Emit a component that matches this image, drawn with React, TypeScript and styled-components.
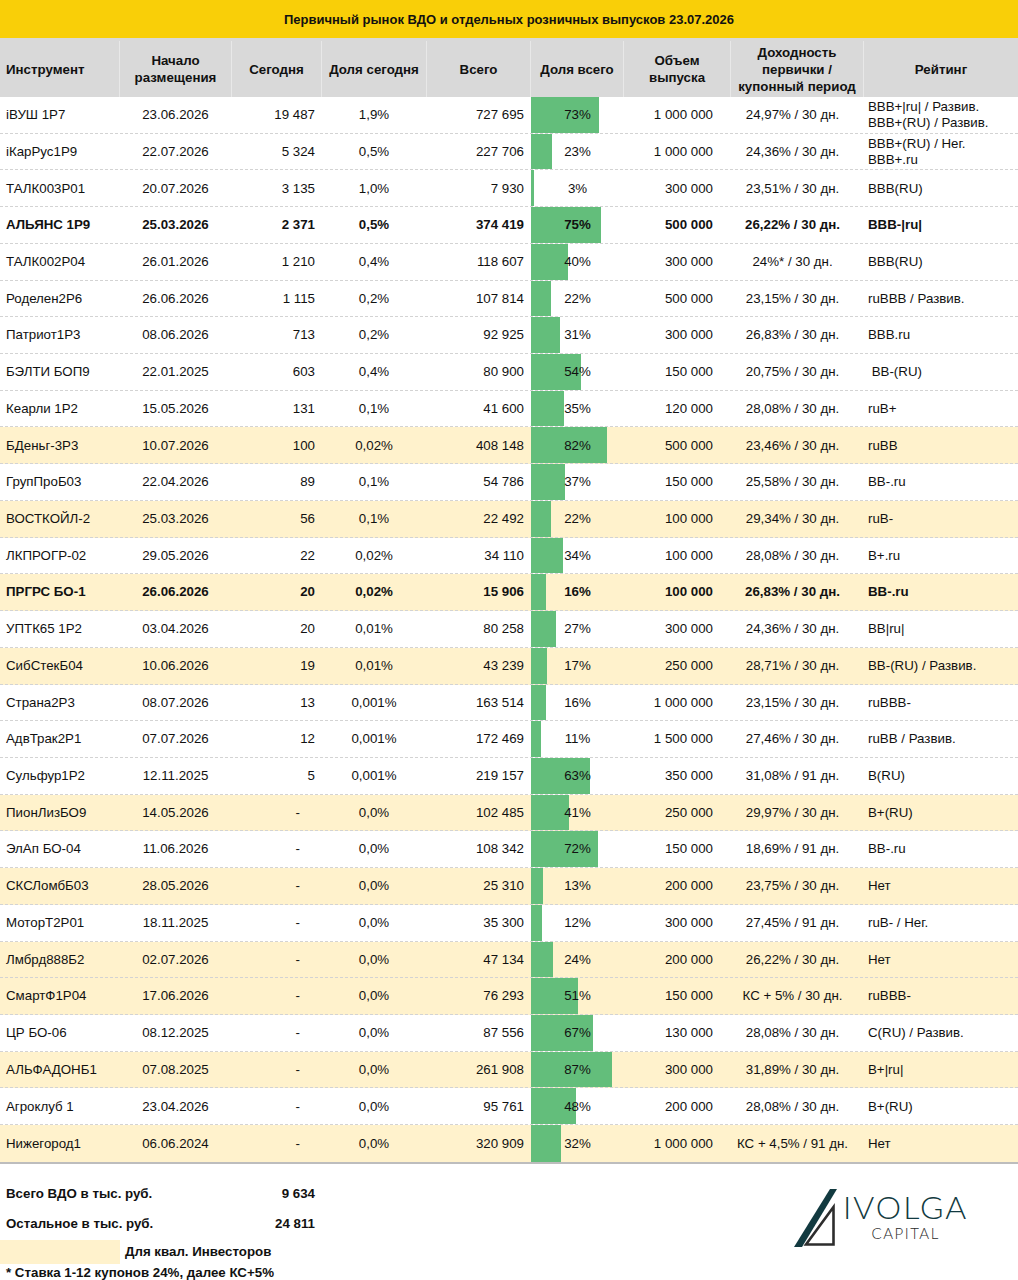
import React from "react";
import styled, { createGlobalStyle, css } from "styled-components";

const GlobalStyle = createGlobalStyle`
  * {
    box-sizing: border-box;
  }
  body {
    margin: 0;
    background: #fff;
    font-family: "Liberation Sans", Arial, sans-serif;
    color: #111;
  }
`;

const COLS = "120px 112px 90px 105px 104px 93px 107px 133px 1fr";

const Page = styled.div`
  width: 1018px;
  font-size: 13.3px;
`;

const TitleBar = styled.div`
  height: 38px;
  display: flex;
  align-items: center;
  justify-content: center;
  background: #f9cf08;
  font-weight: 700;
  font-size: 13px;
`;

const HeaderRow = styled.div`
  display: grid;
  grid-template-columns: ${COLS};
  height: 59px;
  padding-top: 3px;
  background: #d9d9d9;
`;

const HeaderCell = styled.div<{ $left?: boolean }>`
  display: flex;
  align-items: center;
  justify-content: ${(p) => (p.$left ? "flex-start" : "center")};
  padding: 0 6px;
  text-align: ${(p) => (p.$left ? "left" : "center")};
  font-weight: 700;
  line-height: 17px;
  white-space: pre-line;
  border-right: 1px solid #e8e8e8;

  &:last-child {
    border-right: none;
  }
`;

const Body = styled.div`
  border-bottom: 2px solid #bdbdbd;
`;

const Row = styled.div<{ $yellow?: boolean; $bold?: boolean }>`
  display: grid;
  grid-template-columns: ${COLS};
  height: 36.72px;
  padding-top: 1px;
  background: ${(p) => (p.$yellow ? "#fff2cc" : "#fff")};
  border-bottom: 1px dashed #d3d3d3;
  font-weight: ${(p) => (p.$bold ? 700 : 400)};
  line-height: 16.5px;

  &:last-child {
    border-bottom: none;
  }
`;

type Align = "left" | "center" | "right";

const Cell = styled.div<{ $align?: Align; $pl?: number; $pr?: number }>`
  display: flex;
  align-items: center;
  white-space: pre;
  padding: 0 ${(p) => p.$pr ?? 7}px 0 ${(p) => p.$pl ?? 6}px;
  ${(p) =>
    p.$align === "right"
      ? css`
          justify-content: flex-end;
        `
      : p.$align === "center"
      ? css`
          justify-content: center;
          text-align: center;
        `
      : css`
          justify-content: flex-start;
        `}
`;

const Dash = styled.span`
  margin-right: 15px;
`;

const BarCell = styled.div`
  position: relative;
  display: flex;
  align-items: center;
  justify-content: center;
`;

const Bar = styled.div`
  position: absolute;
  left: 0;
  top: -1px;
  bottom: 0;
  background: #63be7b;
`;

const BarText = styled.span`
  position: relative;
`;

const Footer = styled.div`
  display: flex;
  padding-top: 15px;
  font-weight: 700;
`;

const FooterLeft = styled.div`
  width: 322px;
  display: flex;
  flex-direction: column;
`;

const SumRow = styled.div`
  display: grid;
  grid-template-columns: 226px 83px;
  height: 30px;
  align-items: center;
  padding-left: 6px;
`;

const SumValue = styled.span`
  text-align: right;
`;

const QualRow = styled.div`
  display: flex;
  align-items: center;
  height: 24px;
  margin-top: 1px;
`;

const Swatch = styled.div`
  width: 120px;
  height: 24px;
  background: #fff2cc;
  margin-right: 5px;
`;

const Note = styled.div`
  height: 18px;
  display: flex;
  align-items: center;
  padding-left: 6px;
`;

const Logo = styled.div`
  display: flex;
  align-items: flex-start;
  margin-left: 471px;
  margin-top: 8px;
`;

const LogoText = styled.div`
  display: flex;
  flex-direction: column;
  align-items: center;
  margin-left: 4px;
  font-family: Lato, "Open Sans", sans-serif;
  font-weight: 300;
`;

const LogoTitle = styled.span`
  font-size: 32px;
  line-height: 34px;
  letter-spacing: 2px;
  color: #123a40;
  margin-top: 3px;
`;

const LogoSub = styled.span`
  font-size: 15px;
  line-height: 16px;
  letter-spacing: 1.5px;
  color: #2b2b2b;
  margin-top: 1px;
`;

type Bond = {
  name: string;
  start: string;
  today: string;
  todayShare: string;
  total: string;
  share: number;
  volume: string;
  yieldText: string;
  rating: string;
  yellow?: boolean;
  bold?: boolean;
};

const bonds: Bond[] = [
  { name: "iВУШ 1P7", start: "23.06.2026", today: "19 487", todayShare: "1,9%", total: "727 695", share: 73, volume: "1 000 000", yieldText: "24,97% / 30 дн.", rating: "BBB+|ru| / Развив.\nBBB+(RU) / Развив." },
  { name: "iКарРус1P9", start: "22.07.2026", today: "5 324", todayShare: "0,5%", total: "227 706", share: 23, volume: "1 000 000", yieldText: "24,36% / 30 дн.", rating: "BBB+(RU) / Нег.\nBBB+.ru" },
  { name: "ТАЛК003Р01", start: "20.07.2026", today: "3 135", todayShare: "1,0%", total: "7 930", share: 3, volume: "300 000", yieldText: "23,51% / 30 дн.", rating: "BBB(RU)" },
  { name: "АЛЬЯНС 1P9", start: "25.03.2026", today: "2 371", todayShare: "0,5%", total: "374 419", share: 75, volume: "500 000", yieldText: "26,22% / 30 дн.", rating: "BBB-|ru|", bold: true },
  { name: "ТАЛК002Р04", start: "26.01.2026", today: "1 210", todayShare: "0,4%", total: "118 607", share: 40, volume: "300 000", yieldText: "24%* / 30 дн.", rating: "BBB(RU)" },
  { name: "Роделен2Р6", start: "26.06.2026", today: "1 115", todayShare: "0,2%", total: "107 814", share: 22, volume: "500 000", yieldText: "23,15% / 30 дн.", rating: "ruBBB / Развив." },
  { name: "Патриот1Р3", start: "08.06.2026", today: "713", todayShare: "0,2%", total: "92 925", share: 31, volume: "300 000", yieldText: "26,83% / 30 дн.", rating: "BBB.ru" },
  { name: "БЭЛТИ БОП9", start: "22.01.2025", today: "603", todayShare: "0,4%", total: "80 900", share: 54, volume: "150 000", yieldText: "20,75% / 30 дн.", rating: " BB-(RU)" },
  { name: "Кеарли 1Р2", start: "15.05.2026", today: "131", todayShare: "0,1%", total: "41 600", share: 35, volume: "120 000", yieldText: "28,08% / 30 дн.", rating: "ruB+" },
  { name: "БДеньг-3Р3", start: "10.07.2026", today: "100", todayShare: "0,02%", total: "408 148", share: 82, volume: "500 000", yieldText: "23,46% / 30 дн.", rating: "ruBB", yellow: true },
  { name: "ГрупПроБ03", start: "22.04.2026", today: "89", todayShare: "0,1%", total: "54 786", share: 37, volume: "150 000", yieldText: "25,58% / 30 дн.", rating: "BB-.ru" },
  { name: "ВОСТКОЙЛ-2", start: "25.03.2026", today: "56", todayShare: "0,1%", total: "22 492", share: 22, volume: "100 000", yieldText: "29,34% / 30 дн.", rating: "ruB-", yellow: true },
  { name: "ЛКПРОГР-02", start: "29.05.2026", today: "22", todayShare: "0,02%", total: "34 110", share: 34, volume: "100 000", yieldText: "28,08% / 30 дн.", rating: "B+.ru" },
  { name: "ПРГРС БО-1", start: "26.06.2026", today: "20", todayShare: "0,02%", total: "15 906", share: 16, volume: "100 000", yieldText: "26,83% / 30 дн.", rating: "BB-.ru", yellow: true, bold: true },
  { name: "УПТК65 1Р2", start: "03.04.2026", today: "20", todayShare: "0,01%", total: "80 258", share: 27, volume: "300 000", yieldText: "24,36% / 30 дн.", rating: "BB|ru|" },
  { name: "СибСтекБ04", start: "10.06.2026", today: "19", todayShare: "0,01%", total: "43 239", share: 17, volume: "250 000", yieldText: "28,71% / 30 дн.", rating: "BB-(RU) / Развив.", yellow: true },
  { name: "Страна2Р3", start: "08.07.2026", today: "13", todayShare: "0,001%", total: "163 514", share: 16, volume: "1 000 000", yieldText: "23,15% / 30 дн.", rating: "ruBBB-" },
  { name: "АдвТрак2Р1", start: "07.07.2026", today: "12", todayShare: "0,001%", total: "172 469", share: 11, volume: "1 500 000", yieldText: "27,46% / 30 дн.", rating: "ruBB / Развив." },
  { name: "Сульфур1Р2", start: "12.11.2025", today: "5", todayShare: "0,001%", total: "219 157", share: 63, volume: "350 000", yieldText: "31,08% / 91 дн.", rating: "B(RU)" },
  { name: "ПионЛизБО9", start: "14.05.2026", today: "-", todayShare: "0,0%", total: "102 485", share: 41, volume: "250 000", yieldText: "29,97% / 30 дн.", rating: "B+(RU)", yellow: true },
  { name: "ЭлАп БО-04", start: "11.06.2026", today: "-", todayShare: "0,0%", total: "108 342", share: 72, volume: "150 000", yieldText: "18,69% / 91 дн.", rating: "BB-.ru" },
  { name: "СКСЛомбБ03", start: "28.05.2026", today: "-", todayShare: "0,0%", total: "25 310", share: 13, volume: "200 000", yieldText: "23,75% / 30 дн.", rating: "Нет", yellow: true },
  { name: "МоторТ2Р01", start: "18.11.2025", today: "-", todayShare: "0,0%", total: "35 300", share: 12, volume: "300 000", yieldText: "27,45% / 91 дн.", rating: "ruB- / Нег." },
  { name: "Лмбрд888Б2", start: "02.07.2026", today: "-", todayShare: "0,0%", total: "47 134", share: 24, volume: "200 000", yieldText: "26,22% / 30 дн.", rating: "Нет", yellow: true },
  { name: "СмартФ1Р04", start: "17.06.2026", today: "-", todayShare: "0,0%", total: "76 293", share: 51, volume: "150 000", yieldText: "КС + 5% / 30 дн.", rating: "ruBBB-", yellow: true },
  { name: "ЦР БО-06", start: "08.12.2025", today: "-", todayShare: "0,0%", total: "87 556", share: 67, volume: "130 000", yieldText: "28,08% / 30 дн.", rating: "C(RU) / Развив." },
  { name: "АЛЬФАДОНБ1", start: "07.08.2025", today: "-", todayShare: "0,0%", total: "261 908", share: 87, volume: "300 000", yieldText: "31,89% / 30 дн.", rating: "B+|ru|", yellow: true },
  { name: "Агроклуб 1", start: "23.04.2026", today: "-", todayShare: "0,0%", total: "95 761", share: 48, volume: "200 000", yieldText: "28,08% / 30 дн.", rating: "B+(RU)" },
  { name: "Нижегород1", start: "06.06.2024", today: "-", todayShare: "0,0%", total: "320 909", share: 32, volume: "1 000 000", yieldText: "КС + 4,5% / 91 дн.", rating: "Нет", yellow: true },
];

const headers = [
  "Инструмент",
  "Начало\nразмещения",
  "Сегодня",
  "Доля сегодня",
  "Всего",
  "Доля всего",
  "Объем\nвыпуска",
  "Доходность\nпервички /\nкупонный период",
  "Рейтинг",
];

const LogoMark = () => (
  <svg width="46" height="62" viewBox="0 0 46 62">
    <polygon points="1,60 9,60 44,2 37,2" fill="#123a40" />
    <path
      d="M13 57.5 L40.5 20 L40.5 57.5 Z"
      fill="none"
      stroke="#2d2d2d"
      strokeWidth="2.6"
      strokeLinejoin="miter"
    />
  </svg>
);

const App = () => {
  return (
    <Page>
      <GlobalStyle />
      <TitleBar>Первичный рынок ВДО и отдельных розничных выпусков 23.07.2026</TitleBar>
      <HeaderRow>
        {headers.map((h, i) => (
          <HeaderCell key={h} $left={i === 0}>
            {h}
          </HeaderCell>
        ))}
      </HeaderRow>
      <Body>
        {bonds.map((b) => (
          <Row key={b.name} $yellow={b.yellow} $bold={b.bold}>
            <Cell>{b.name}</Cell>
            <Cell $align="center">{b.start}</Cell>
            <Cell $align="right">{b.today === "-" ? <Dash>-</Dash> : b.today}</Cell>
            <Cell $align="center">{b.todayShare}</Cell>
            <Cell $align="right">{b.total}</Cell>
            <BarCell>
              <Bar style={{ width: `${b.share}%` }} />
              <BarText>{b.share}%</BarText>
            </BarCell>
            <Cell $align="right" $pr={18}>
              {b.volume}
            </Cell>
            <Cell $align="center" $pl={0} $pr={10}>
              {b.yieldText}
            </Cell>
            <Cell $pl={4}>{b.rating}</Cell>
          </Row>
        ))}
      </Body>
      <Footer>
        <FooterLeft>
          <SumRow>
            <span>Всего ВДО в тыс. руб.</span>
            <SumValue>9 634</SumValue>
          </SumRow>
          <SumRow>
            <span>Остальное в тыс. руб.</span>
            <SumValue>24 811</SumValue>
          </SumRow>
          <QualRow>
            <Swatch />
            <span>Для квал. Инвесторов</span>
          </QualRow>
          <Note>* Ставка 1-12 купонов 24%, далее КС+5%</Note>
        </FooterLeft>
        <Logo>
          <LogoMark />
          <LogoText>
            <LogoTitle>IVOLGA</LogoTitle>
            <LogoSub>CAPITAL</LogoSub>
          </LogoText>
        </Logo>
      </Footer>
    </Page>
  );
};

export default App;
